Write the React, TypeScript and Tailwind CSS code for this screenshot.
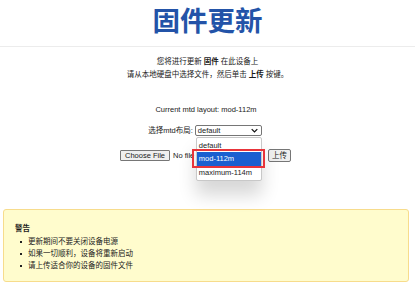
import React from 'react';

const font = { fontFamily: '"Liberation Sans", "Noto Sans CJK SC", sans-serif' };

// small chevron used by the fake select
const Chevron = () => (
  <svg width="7" height="5" viewBox="0 0 10 7" className="shrink-0">
    <path d="M1 1.5 L5 5.5 L9 1.5" fill="none" stroke="#111" strokeWidth="1.8" />
  </svg>
);

const layouts = ['default', 'mod-112m', 'maximum-114m'];

export default function App() {
  return (
    <div className="w-[415px] h-[291px] bg-white text-[7.5px] text-[#1a1a1a] overflow-hidden" style={font}>
      {/* header */}
      <div className="h-[47px] border-b border-[#ececec] pt-[8px]">
        <h1 className="text-center text-[27.5px] leading-[28px] font-bold text-[#2353a8]">固件更新</h1>
      </div>

      {/* intro */}
      <div className="mt-[8px] text-center leading-[13px]">
        <p>您将进行更新 <b>固件</b> 在此设备上</p>
        <p>请从本地硬盘中选择文件，然后单击 <b>上传</b> 按键。</p>
      </div>

      <p className="mt-[22px] text-center leading-[13px] pr-[3px]">Current mtd layout: mod-112m</p>

      {/* layout select */}
      <div className="mt-[8px] h-[13px] flex items-center justify-center pr-[5px]">
        <span className="mr-[2px]">选择mtd布局:</span>
        <div className="relative">
          <div className="w-[67px] h-[11px] border border-[#767676] rounded-[2px] flex items-center justify-between pl-[2px] pr-[3px] bg-white">
            <span>default</span>
            <Chevron />
          </div>
          {/* open dropdown */}
          <div className="absolute left-[1px] top-[12px] w-[66px] z-10 bg-white border border-[#c8c8c8] rounded-[2px] shadow-[0_14px_18px_rgba(0,0,0,0.16)] py-[1px]">
            {layouts.map((l) => (
              <div
                key={l}
                className={
                  l === 'mod-112m'
                    ? 'h-[14px] leading-[14px] px-[2px] bg-[#1a5fd0] text-white'
                    : 'h-[13px] leading-[13px] px-[2px]'
                }
              >
                {l}
              </div>
            ))}
          </div>
          {/* red annotation box */}
          <div className="absolute left-[-3px] top-[24px] w-[73px] h-[19px] border-2 border-[#e8343a] z-20" />
        </div>
      </div>

      {/* file row */}
      <div className="mt-[12px] h-[13px] flex items-center justify-center pr-[4px]">
        <div className="w-[145px] flex items-center">
          <div className="w-[50px] h-[11px] border border-[#767676] bg-[#efefef] rounded-[1px] flex items-center justify-center">
            Choose File
          </div>
          <span className="ml-[3px] whitespace-nowrap">No file chosen</span>
        </div>
        <div className="ml-[3px] w-[23px] h-[13px] border border-[#767676] bg-[#efefef] rounded-[2px] flex items-center justify-center">
          上传
        </div>
      </div>

      {/* warning */}
      <div className="mt-[47px] ml-[3px] w-[406px] h-[73px] bg-[#fffccd] border border-[#f7dc8c] rounded-[3px] px-[11px] pt-[12px]">
        <p className="font-bold leading-[13px]">警告</p>
        <ul className="mt-[1px] leading-[12px]">
          {['更新期间不要关闭设备电源', '如果一切顺利，设备将重新启动', '请上传适合你的设备的固件文件'].map((t) => (
            <li key={t} className="flex items-center">
              <span className="w-[2px] h-[2px] bg-[#222] ml-[5px] mr-[6px]" />
              {t}
            </li>
          ))}
        </ul>
      </div>
    </div>
  );
}
